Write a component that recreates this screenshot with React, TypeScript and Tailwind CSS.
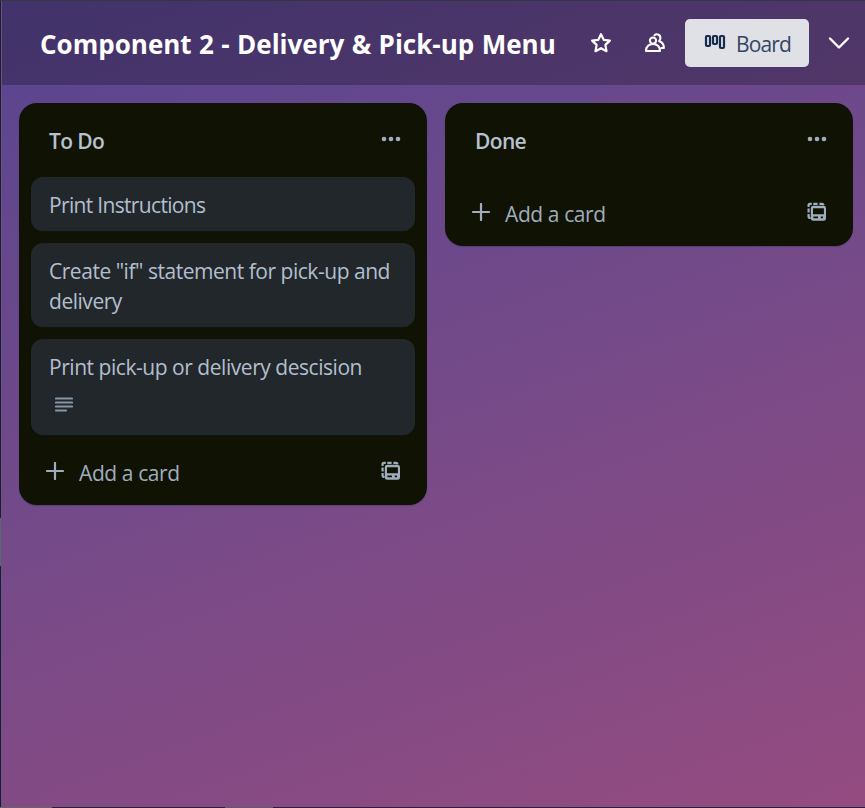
import React from "react";

function StarIcon() {
  return (
    <svg width="24" height="24" viewBox="0 0 24 24" fill="none" stroke="currentColor" strokeWidth="2.2" strokeLinejoin="round">
      <path d="M12 3.2L14.7 8.8L20.9 9.6L16.4 13.9L17.5 20.2L12 17.2L6.5 20.2L7.6 13.9L3.1 9.6L9.3 8.8Z" />
    </svg>
  );
}

function PeopleIcon() {
  return (
    <svg width="24" height="24" viewBox="0 0 24 24" fill="none" stroke="currentColor" strokeWidth="2.1" strokeLinejoin="round" strokeLinecap="round">
      <circle cx="10" cy="9.6" r="3.1" />
      <path d="M3 20C3 15.6 6 13 10 13S17 15.6 17 20Z" />
      <path d="M11.5 4.3C13 2.5 17.4 3.1 17.4 7C17.4 8.3 16.9 9.4 16.1 10.1C18.8 11 20.9 13.3 20.9 17H18.4" />
    </svg>
  );
}

function BoardIcon() {
  return (
    <svg width="22" height="16" viewBox="0 0 22 16" fill="none" stroke="currentColor" strokeWidth="2.2">
      <rect x="2" y="2" width="4" height="10" rx="1" />
      <rect x="9" y="2" width="4" height="8" rx="1" />
      <rect x="16" y="2" width="4" height="12" rx="1" />
    </svg>
  );
}

function TemplateIcon() {
  return (
    <svg width="20" height="20" viewBox="0 0 20 20" fill="none" stroke="currentColor" strokeWidth="2.2">
      <path d="M1.6 5V3Q1.6 1.8 3 1.8H4.8M6.3 1.8H10.6M12.4 1.8H15Q16.2 1.8 16.6 3.2M1.6 6.6V10.4M1.6 12V14.4Q1.6 16 3.6 16" />
      <path fill="currentColor" stroke="none" fillRule="evenodd" d="M6.2 3.8H16.6Q19 3.8 19 6.2V16.4Q19 18.8 16.6 18.8H6.2Q3.8 18.8 3.8 16.4V6.2Q3.8 3.8 6.2 3.8ZM6 6.2V12.2H16.9V6.2ZM6.4 14.6V16.2H11V14.6ZM13.8 14.6V16.2H16V14.6Z" />
    </svg>
  );
}

function DescriptionIcon() {
  return (
    <svg width="18" height="16" viewBox="0 0 18 16" fill="none" stroke="currentColor" strokeWidth="2.2" strokeLinecap="round">
      <path d="M1 2.5H17M1 6.5H17M1 10.5H17M1 14.5H11" />
    </svg>
  );
}

function Card({ children, className = "" }: { children: React.ReactNode; className?: string }) {
  return (
    <div className={`rounded-[12px] bg-[#22272b] px-[18px] pt-[13px] pb-[11px] text-[21px] leading-[30px] text-[#b2bfce] shadow-[0_1px_1px_#091e4240] ${className}`}>
      {children}
    </div>
  );
}

function List({ title, children }: { title: string; children?: React.ReactNode }) {
  return (
    <section className="w-[408px] shrink-0 rounded-[18px] bg-[#101204] px-3 shadow-[0_1px_1px_#091e4240]">
      <div className="flex h-[74px] items-center justify-between pr-[14px] pl-[18px]">
        <h2 className="mt-px text-[21px] leading-[30px] font-semibold tracking-[-0.65px] text-[#b6c2cf]">{title}</h2>
        <svg width="20" height="8" viewBox="0 0 20 8" className="mb-[3px] text-[#9fadbc]" fill="currentColor">
          <circle cx="3" cy="4" r="2.3" />
          <circle cx="10" cy="4" r="2.3" />
          <circle cx="17" cy="4" r="2.3" />
        </svg>
      </div>
      <div className="flex flex-col gap-3">{children}</div>
      <div className={`flex items-center pr-[14px] pl-[15px] text-[#9fadbc] ${children ? "h-[70px]" : "h-[69px]"}`}>
        <svg width="18" height="18" viewBox="0 0 18 18" className="mt-px" fill="none" stroke="currentColor" strokeWidth="2.2" strokeLinecap="round">
          <path d="M9 1V17M1 9H17" />
        </svg>
        <span className="mt-[5px] ml-[15px] text-[21px] leading-[30px] tracking-[-0.4px]">Add a card</span>
        <span className="mt-px ml-auto"><TemplateIcon /></span>
      </div>
    </section>
  );
}

export default function App() {
  return (
    <div className="grid h-[808px] w-[865px] grid-cols-[2px_1fr] grid-rows-[1px_1fr_1px] overflow-hidden font-['Open_Sans','Noto_Sans',sans-serif]">
      <div className="col-span-2 bg-[#343841]" />
      <div className="flex flex-col border-r border-[#66518b] bg-[#211d2d]">
        <div className="mt-[517px] h-[48px] bg-[#64636a]" />
      </div>
      <main className="min-w-0 bg-linear-[160deg,#584590_0%,#744a89_48%,#944b80_100%]">
        <header className="flex h-[84px] items-center bg-black/25 pl-[38px] text-white">
          <h1 className="mt-px w-[520px] text-[26px] leading-9 font-bold tracking-[0.01px] [word-spacing:0.6px] whitespace-nowrap">Component 2 - Delivery &amp; Pick-up Menu</h1>
          <span className="ml-[29px]"><StarIcon /></span>
          <span className="ml-[30px]"><PeopleIcon /></span>
          <button className="ml-[18px] flex h-[48px] w-[124px] items-center rounded-[5px] bg-[#dfe1e6] pl-[19px] text-[#172b4d]">
            <span className="mb-[3px]"><BoardIcon /></span>
            <span className="mt-[2px] ml-[10px] text-[21px] leading-[30px] tracking-[-0.85px] text-[#344563]">Board</span>
          </button>
          <svg width="22" height="14" viewBox="0 0 22 14" className="ml-[19px]" fill="none" stroke="currentColor" strokeWidth="2.4" strokeLinecap="round" strokeLinejoin="round">
            <path d="M2 2.5L11 11.5L20 2.5" />
          </svg>
        </header>
        <div className="flex items-start gap-[18px] pt-[18px] pl-[17px]">
          <List title="To Do">
            <Card className="tracking-[-0.67px]">Print Instructions</Card>
            <Card className="tracking-[-0.47px]">Create "if" statement for pick-up and<br />delivery</Card>
            <Card className="h-[96px] tracking-[-0.46px]">
              Print pick-up or delivery descision
              <div className="mt-[14px] ml-[6px] text-[#8696a7]"><DescriptionIcon /></div>
            </Card>
          </List>
          <List title="Done" />
        </div>
      </main>
      <div className="col-span-2 flex bg-[#2a2138]">
        <div className="w-[52px] bg-[#66636a]" />
        <div className="ml-[173px] w-[48px] bg-[#66586f]" />
      </div>
    </div>
  );
}
